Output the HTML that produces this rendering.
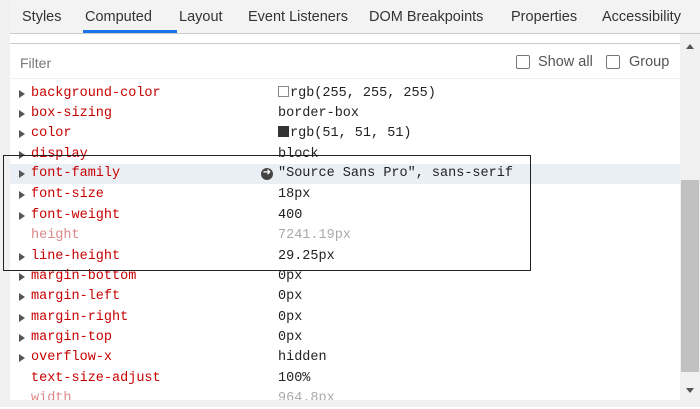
<!DOCTYPE html>
<html><head><style>
body{margin:0;width:700px;height:407px;overflow:hidden;background:#fff;font-family:"Liberation Sans",sans-serif;position:relative}
.left{position:absolute;left:0;top:0;width:10px;height:407px;background:#f1f1f1}
.tabs{position:absolute;left:10px;top:0;width:690px;height:33px;background:#f3f3f3;border-bottom:1px solid #ccc}
.tab{position:absolute;top:9px;font-size:14.5px;color:#333}
.ul{position:absolute;left:73px;top:30px;width:94px;height:3px;background:#1a73e8}
.sep{position:absolute;left:10px;top:43px;width:690px;height:1px;background:#ccc}
.filter{position:absolute;left:20px;top:55px;font-size:14px;color:#777}
.cb{position:absolute;top:55px;width:12px;height:12px;border:1px solid #777;border-radius:2px}
.cbl{position:absolute;top:54px;font-size:14.5px;color:#555}
.row{position:absolute;left:10px;width:670px;height:20px;font-family:"Liberation Mono",monospace;font-size:13.5px;line-height:20px}
.tri{position:absolute;left:9px;top:6px;width:0;height:0;border-left:6px solid #555;border-top:4px solid transparent;border-bottom:4px solid transparent}
.n{position:absolute;left:21px;color:#c80000}
.v{position:absolute;left:268px;color:#222}
.g .n{color:#d88}.g .v{color:#aaa}
.sw{display:inline-block;width:9px;height:9px;border:1px solid #888;margin-right:1px;vertical-align:-1px}
.sb{position:absolute;left:680px;top:34px;width:20px;height:366px;background:#f1f1f1}
.thumb{position:absolute;left:681px;top:180px;width:18px;height:192px;background:#c1c1c1}
.box{position:absolute;left:3px;top:155px;width:526px;height:114px;border:1px solid #222}
.bot{position:absolute;left:0;top:400px;width:700px;height:7px;background:#f1f1f1}
</style></head><body>
<div class="left"></div>
<div class="tabs">
<span class="tab" style="left:12px">Styles</span>
<span class="tab" style="left:75px">Computed</span>
<span class="tab" style="left:169px">Layout</span>
<span class="tab" style="left:238px">Event Listeners</span>
<span class="tab" style="left:359px">DOM Breakpoints</span>
<span class="tab" style="left:501px">Properties</span>
<span class="tab" style="left:592px">Accessibility</span>
<div class="ul"></div>
</div>
<div class="sep"></div>
<div class="filter">Filter</div>
<div class="cb" style="left:516px"></div><span class="cbl" style="left:538px">Show all</span>
<div class="cb" style="left:606px"></div><span class="cbl" style="left:629px">Group</span>
<div style="position:absolute;left:10px;top:78px;width:670px;height:1px;background:#f0f0f0"></div>

<div class="row" style="top:84px"><div class="tri"></div><span class="n">background-color</span><span class="v"><span class="sw" style="background:#fff"></span>rgb(255, 255, 255)</span></div>
<div class="row" style="top:104px"><div class="tri"></div><span class="n">box-sizing</span><span class="v">border-box</span></div>
<div class="row" style="top:124px"><div class="tri"></div><span class="n">color</span><span class="v"><span class="sw" style="background:#333;border-color:#333"></span>rgb(51, 51, 51)</span></div>
<div class="row" style="top:145px"><div class="tri"></div><span class="n">display</span><span class="v">block</span></div>
<div class="row" style="top:164px;background:#eaeef5"><div class="tri"></div><span class="n">font-family</span><span style="position:absolute;left:251px;top:4px;width:12px;height:12px;border-radius:50%;background:#444;color:#fff;font-size:10px;line-height:12px;text-align:center">➜</span><span class="v">"Source Sans Pro", sans-serif</span></div>
<div class="row" style="top:185px"><div class="tri"></div><span class="n">font-size</span><span class="v">18px</span></div>
<div class="row" style="top:206px"><div class="tri"></div><span class="n">font-weight</span><span class="v">400</span></div>
<div class="row g" style="top:226px"><span class="n">height</span><span class="v">7241.19px</span></div>
<div class="row" style="top:247px"><div class="tri"></div><span class="n">line-height</span><span class="v">29.25px</span></div>
<div class="row" style="top:267px"><div class="tri"></div><span class="n">margin-bottom</span><span class="v">0px</span></div>
<div class="row" style="top:287px"><div class="tri"></div><span class="n">margin-left</span><span class="v">0px</span></div>
<div class="row" style="top:308px"><div class="tri"></div><span class="n">margin-right</span><span class="v">0px</span></div>
<div class="row" style="top:328px"><div class="tri"></div><span class="n">margin-top</span><span class="v">0px</span></div>
<div class="row" style="top:348px"><div class="tri"></div><span class="n">overflow-x</span><span class="v">hidden</span></div>
<div class="row" style="top:369px"><span class="n">text-size-adjust</span><span class="v">100%</span></div>
<div class="row g" style="top:389px"><span class="n">width</span><span class="v">964.8px</span></div>
<div class="box"></div>
<div class="sb"></div>
<div class="thumb"></div>
<div style="position:absolute;left:686px;top:44px;border-bottom:5px solid #555;border-left:4px solid transparent;border-right:4px solid transparent"></div>
<div style="position:absolute;left:686px;top:388px;border-top:5px solid #555;border-left:4px solid transparent;border-right:4px solid transparent"></div>
<div class="bot"></div>
</body></html>
